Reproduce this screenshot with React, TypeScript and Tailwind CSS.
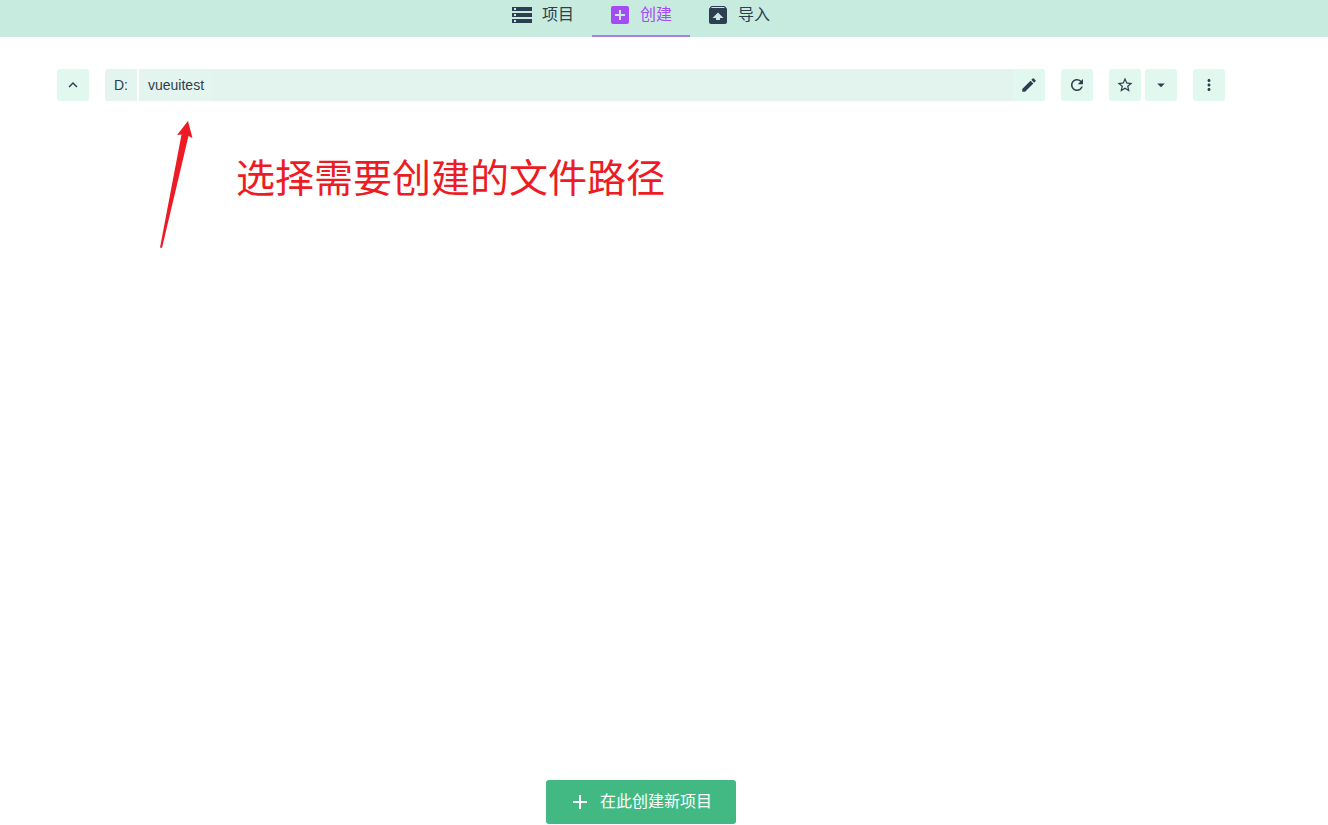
import { useState } from "react";
import {
  MdAdd,
  MdAddBox,
  MdArrowDropDown,
  MdEdit,
  MdExpandLess,
  MdMoreVert,
  MdRefresh,
  MdStarBorder,
  MdStorage,
} from "react-icons/md";

// Box with a lid line and an arrow pointing up
function ImportIcon({ size }: { size: number }) {
  return (
    <svg width={size} height={size} viewBox="0 0 24 24" fill="currentColor">
      <path d="M20.55 5.22l-1.39-1.68A1.51 1.51 0 0 0 18 3H6c-.47 0-.88.21-1.15.55L3.46 5.22C3.17 5.57 3 6.01 3 6.5V19a2 2 0 0 0 2 2h14c1.1 0 2-.9 2-2V6.5c0-.49-.17-.93-.45-1.28zM12 9.5l5.5 5.5H14v2h-4v-2H6.5L12 9.5zM5.12 5l.82-1h12l.93 1H5.12z" />
    </svg>
  );
}

const tabs = [
  { id: "projects", label: "项目", icon: MdStorage },
  { id: "create", label: "创建", icon: MdAddBox },
  { id: "import", label: "导入", icon: ImportIcon },
];

const iconButton =
  "flex h-8 w-8 shrink-0 items-center justify-center rounded-[3px] bg-[#e0f8ed] text-[#2c3e50]";

export default function App() {
  const [currentTab, setCurrentTab] = useState("create");

  return (
    <div className="flex min-h-screen flex-col bg-white font-['Liberation_Sans','Noto_Sans_CJK_SC',sans-serif] text-[#2c3e50]">
      <nav className="flex justify-center bg-[#c8ebdf] pr-[46px]">
        {tabs.map((tab) => (
          <button
            key={tab.id}
            onClick={() => setCurrentTab(tab.id)}
            className={
              currentTab === tab.id
                ? "flex w-[98px] items-center gap-2 border-b-2 border-[#a97ee8] px-4 pt-[3px] pb-2 text-[#a44cf4]"
                : "flex w-[98px] items-center gap-2 border-b-2 border-transparent px-4 pt-[3px] pb-2"
            }
          >
            <tab.icon size={24} />
            {tab.label}
          </button>
        ))}
      </nav>

      <main className="relative flex flex-1 flex-col pr-[103px] pl-[57px]">
        <div className="flex gap-4 pt-8">
          <button className={iconButton} aria-label="Parent folder">
            <MdExpandLess size={18} />
          </button>

          <div className="flex h-8 flex-1 gap-0.5 overflow-hidden rounded-[3px] text-sm">
            <button className="w-8 bg-[#e4f5ef]">D:</button>
            <div className="flex flex-1 bg-[#e3f4ee]">
              <button className="bg-[#e4f5ef] px-[9px]">vueuitest</button>
              <button
                className="ml-auto flex w-8 items-center justify-center bg-[#e0f8ed]"
                aria-label="Edit path"
              >
                <MdEdit size={18} />
              </button>
            </div>
          </div>

          <button className={iconButton} aria-label="Refresh">
            <MdRefresh size={18} />
          </button>

          <div className="flex gap-1">
            <button className={iconButton} aria-label="Add to favorites">
              <MdStarBorder size={18} />
            </button>
            <button className={iconButton} aria-label="Show favorites">
              <MdArrowDropDown size={18} />
            </button>
          </div>

          <button className={iconButton} aria-label="More">
            <MdMoreVert size={18} />
          </button>
        </div>

        {/* Hint on top of the folder list */}
        <svg
          className="absolute top-[84px] left-[160px]"
          width="33"
          height="128"
          viewBox="0 0 33 128"
          fill="#ed1c24"
          aria-hidden="true"
        >
          <path d="M28 0L17 14L21.5 13.5L0 126.5L2 127L28.5 15L32.5 17Z" />
        </svg>
        <p className="absolute top-[113px] left-[236px] text-[39px] leading-[58px] whitespace-nowrap text-[#ed1c24]">
          选择需要创建的文件路径
        </p>

        <div className="mt-auto flex justify-center pb-px">
          <button className="flex h-11 w-[190px] items-center justify-center gap-2 rounded-[3px] bg-[#42b983] pr-0.5 text-white">
            <MdAdd size={24} />
            在此创建新项目
          </button>
        </div>
      </main>
    </div>
  );
}
